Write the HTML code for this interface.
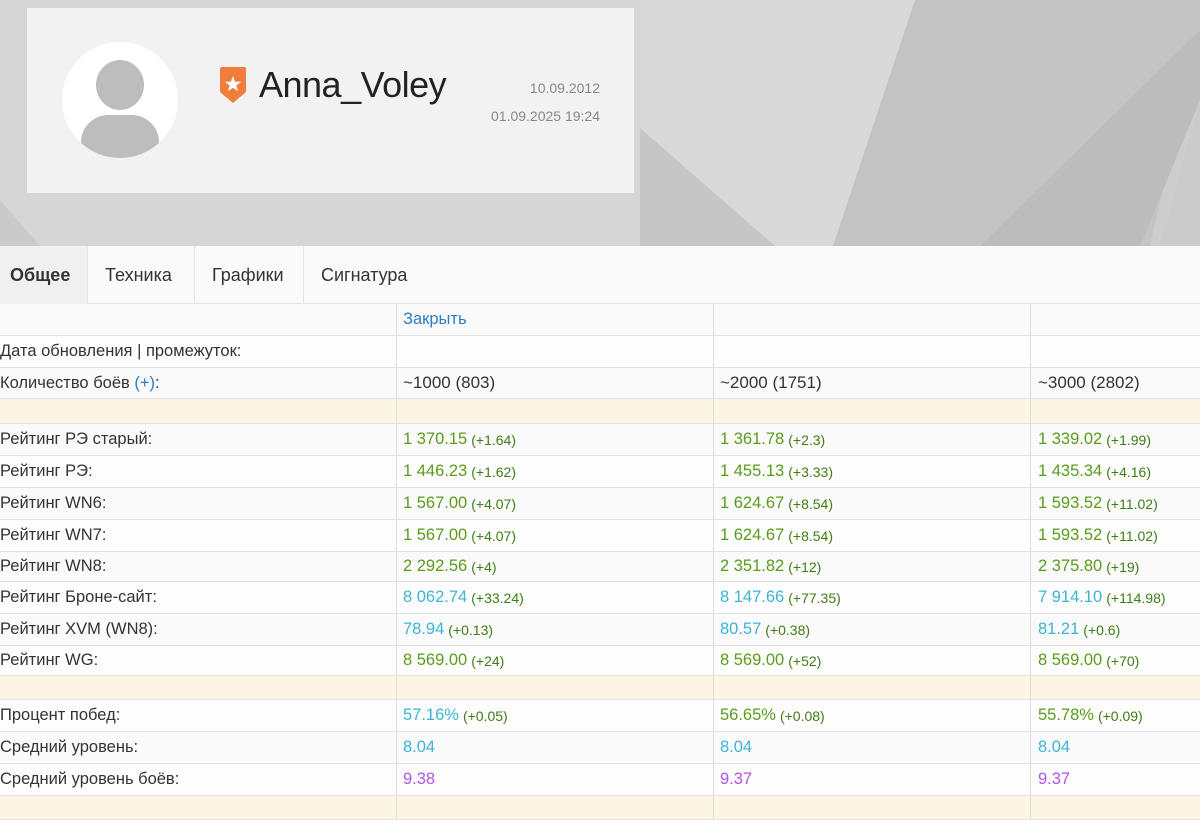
<!DOCTYPE html>
<html><head><meta charset="utf-8"><style>
*{box-sizing:border-box;margin:0;padding:0}
body{width:1200px;height:813px;overflow:hidden;background:#fff;font-family:"Liberation Sans",sans-serif;color:#333;position:relative}
#hdr{position:absolute;left:0;top:0;width:1200px;height:246px}
.card{position:absolute;left:27px;top:8px;width:607px;height:185px;background:#f2f2f2}
.av{position:absolute;left:35px;top:34px;width:116px;height:116px;border-radius:50%;background:#fff;overflow:hidden}
.av .h{position:absolute;left:34px;top:18px;width:48px;height:50px;border-radius:50%;background:#bdbdbd}
.av .b{position:absolute;left:19px;top:73px;width:78px;height:50px;border-radius:36px 36px 30px 30px;background:#bdbdbd}
.name{position:absolute;left:232px;top:56px;font-size:36px;color:#222;letter-spacing:-0.5px}
.d1,.d2{position:absolute;right:34px;font-size:14px;color:#888}
.d1{top:72px}.d2{top:100px}
#tabs{position:absolute;left:0;top:246px;width:1200px;height:58px;background:#fafafa;border-bottom:1px solid #e4e4e4}
.tab{position:absolute;top:0;height:58px;line-height:58px;font-size:18px;color:#333;border-right:1px solid #e6e6e6;padding-left:10px}
#tbl{position:absolute;left:0;top:304px;width:1200px}
.r{display:flex;border-bottom:1px solid #e2e2e2;font-size:16.5px;background:#fafafa}
.r:nth-child(even){background:#fdfdfd}
.r>div{display:flex;align-items:center;white-space:nowrap}
.c0{width:396px}
.c1{width:317px;border-left:1px solid #dedede;padding-left:6px}
.c2{width:317px;border-left:1px solid #dedede;padding-left:6px}
.c3{width:170px;border-left:1px solid #dedede;padding-left:7px}
.y{background:#fdf5e4 !important}
.g{color:#5a9c1c}.cy{color:#3db5d5}.p{color:#b454e6}
.s{font-size:14px;color:#3f7d16;margin-left:4px}
.bl{color:#2a7ec0}
</style></head><body>
<div id="hdr">
<svg width="1200" height="246" style="position:absolute;left:0;top:0">
<rect width="1200" height="246" fill="#cdcdcd"/>
<polygon points="0,0 640,0 640,246 0,246" fill="#d6d6d6"/>
<polygon points="640,0 915,0 833,246 775,246 640,128" fill="#d9d9d9"/>
<polygon points="915,0 1200,0 1200,30 1150,246 833,246" fill="#c4c4c4"/>
<polygon points="1200,30 1200,100 1140,246 980,246" fill="#bcbcbc"/>
<polygon points="1200,100 1200,246 1160,246" fill="#cbcbcb"/>
<polygon points="640,128 775,246 640,246" fill="#c6c6c6"/>
<polygon points="0,200 40,246 0,246" fill="#cacaca"/>
</svg>
<div class="card">
<div class="av"><div class="h"></div><div class="b"></div></div>
<svg style="position:absolute;left:191px;top:57px" width="30" height="40" viewBox="0 0 30 40"><path d="M4 2 H26 Q28 2 28 4 V27 L15 38 L2 27 V4 Q2 2 4 2Z" fill="#f07d3c"/><polygon points="15,11 17.1,16.8 23.2,16.8 18.3,20.5 20.1,26.3 15,22.7 9.9,26.3 11.7,20.5 6.8,16.8 12.9,16.8" fill="#fff"/></svg>
<div class="name">Anna_Voley</div>
<div class="d1">10.09.2012</div>
<div class="d2">01.09.2025 19:24</div>
</div>
</div>
<div id="tabs">
<div class="tab" style="left:0;width:88px;background:#f0f0f0;font-weight:bold">Общее</div>
<div class="tab" style="left:88px;width:107px;padding-left:17px">Техника</div>
<div class="tab" style="left:195px;width:109px;padding-left:17px">Графики</div>
<div class="tab" style="left:304px;width:124px;border:none;padding-left:17px">Сигнатура</div>
</div>
<div id="tbl">
<div class="r" style="height:32px"><div class="c0"></div><div class="c1 bl">Закрыть</div><div class="c2"></div><div class="c3"></div></div>
<div class="r" style="height:32px"><div class="c0">Дата обновления | промежуток:</div><div class="c1"></div><div class="c2"></div><div class="c3"></div></div>
<div class="r" style="height:31px;font-size:17px"><div class="c0" style="font-size:16.5px">Количество боёв&nbsp;<span class="bl">(+)</span>:</div><div class="c1">~1000 (803)</div><div class="c2">~2000 (1751)</div><div class="c3">~3000 (2802)</div></div>
<div class="r y" style="height:25px"><div class="c0"></div><div class="c1"></div><div class="c2"></div><div class="c3"></div></div>
<div class="r" style="height:32px"><div class="c0">Рейтинг РЭ старый:</div><div class="c1 g">1 370.15<span class="s">(+1.64)</span></div><div class="c2 g">1 361.78<span class="s">(+2.3)</span></div><div class="c3 g">1 339.02<span class="s">(+1.99)</span></div></div>
<div class="r" style="height:32px"><div class="c0">Рейтинг РЭ:</div><div class="c1 g">1 446.23<span class="s">(+1.62)</span></div><div class="c2 g">1 455.13<span class="s">(+3.33)</span></div><div class="c3 g">1 435.34<span class="s">(+4.16)</span></div></div>
<div class="r" style="height:32px"><div class="c0">Рейтинг WN6:</div><div class="c1 g">1 567.00<span class="s">(+4.07)</span></div><div class="c2 g">1 624.67<span class="s">(+8.54)</span></div><div class="c3 g">1 593.52<span class="s">(+11.02)</span></div></div>
<div class="r" style="height:32px"><div class="c0">Рейтинг WN7:</div><div class="c1 g">1 567.00<span class="s">(+4.07)</span></div><div class="c2 g">1 624.67<span class="s">(+8.54)</span></div><div class="c3 g">1 593.52<span class="s">(+11.02)</span></div></div>
<div class="r" style="height:30px"><div class="c0">Рейтинг WN8:</div><div class="c1 g">2 292.56<span class="s">(+4)</span></div><div class="c2 g">2 351.82<span class="s">(+12)</span></div><div class="c3 g">2 375.80<span class="s">(+19)</span></div></div>
<div class="r" style="height:32px"><div class="c0">Рейтинг Броне-сайт:</div><div class="c1 cy">8 062.74<span class="s">(+33.24)</span></div><div class="c2 cy">8 147.66<span class="s">(+77.35)</span></div><div class="c3 cy">7 914.10<span class="s">(+114.98)</span></div></div>
<div class="r" style="height:32px"><div class="c0">Рейтинг XVM (WN8):</div><div class="c1 cy">78.94<span class="s">(+0.13)</span></div><div class="c2 cy">80.57<span class="s">(+0.38)</span></div><div class="c3 cy">81.21<span class="s">(+0.6)</span></div></div>
<div class="r" style="height:30px"><div class="c0">Рейтинг WG:</div><div class="c1 g">8 569.00<span class="s">(+24)</span></div><div class="c2 g">8 569.00<span class="s">(+52)</span></div><div class="c3 g">8 569.00<span class="s">(+70)</span></div></div>
<div class="r y" style="height:24px"><div class="c0"></div><div class="c1"></div><div class="c2"></div><div class="c3"></div></div>
<div class="r" style="height:32px"><div class="c0">Процент побед:</div><div class="c1 cy">57.16%<span class="s">(+0.05)</span></div><div class="c2 g">56.65%<span class="s">(+0.08)</span></div><div class="c3 g">55.78%<span class="s">(+0.09)</span></div></div>
<div class="r" style="height:32px"><div class="c0">Средний уровень:</div><div class="c1 cy">8.04</div><div class="c2 cy">8.04</div><div class="c3 cy">8.04</div></div>
<div class="r" style="height:32px"><div class="c0">Средний уровень боёв:</div><div class="c1 p">9.38</div><div class="c2 p">9.37</div><div class="c3 p">9.37</div></div>
<div class="r y" style="height:24px"><div class="c0"></div><div class="c1"></div><div class="c2"></div><div class="c3"></div></div>
</div>
</body></html>
